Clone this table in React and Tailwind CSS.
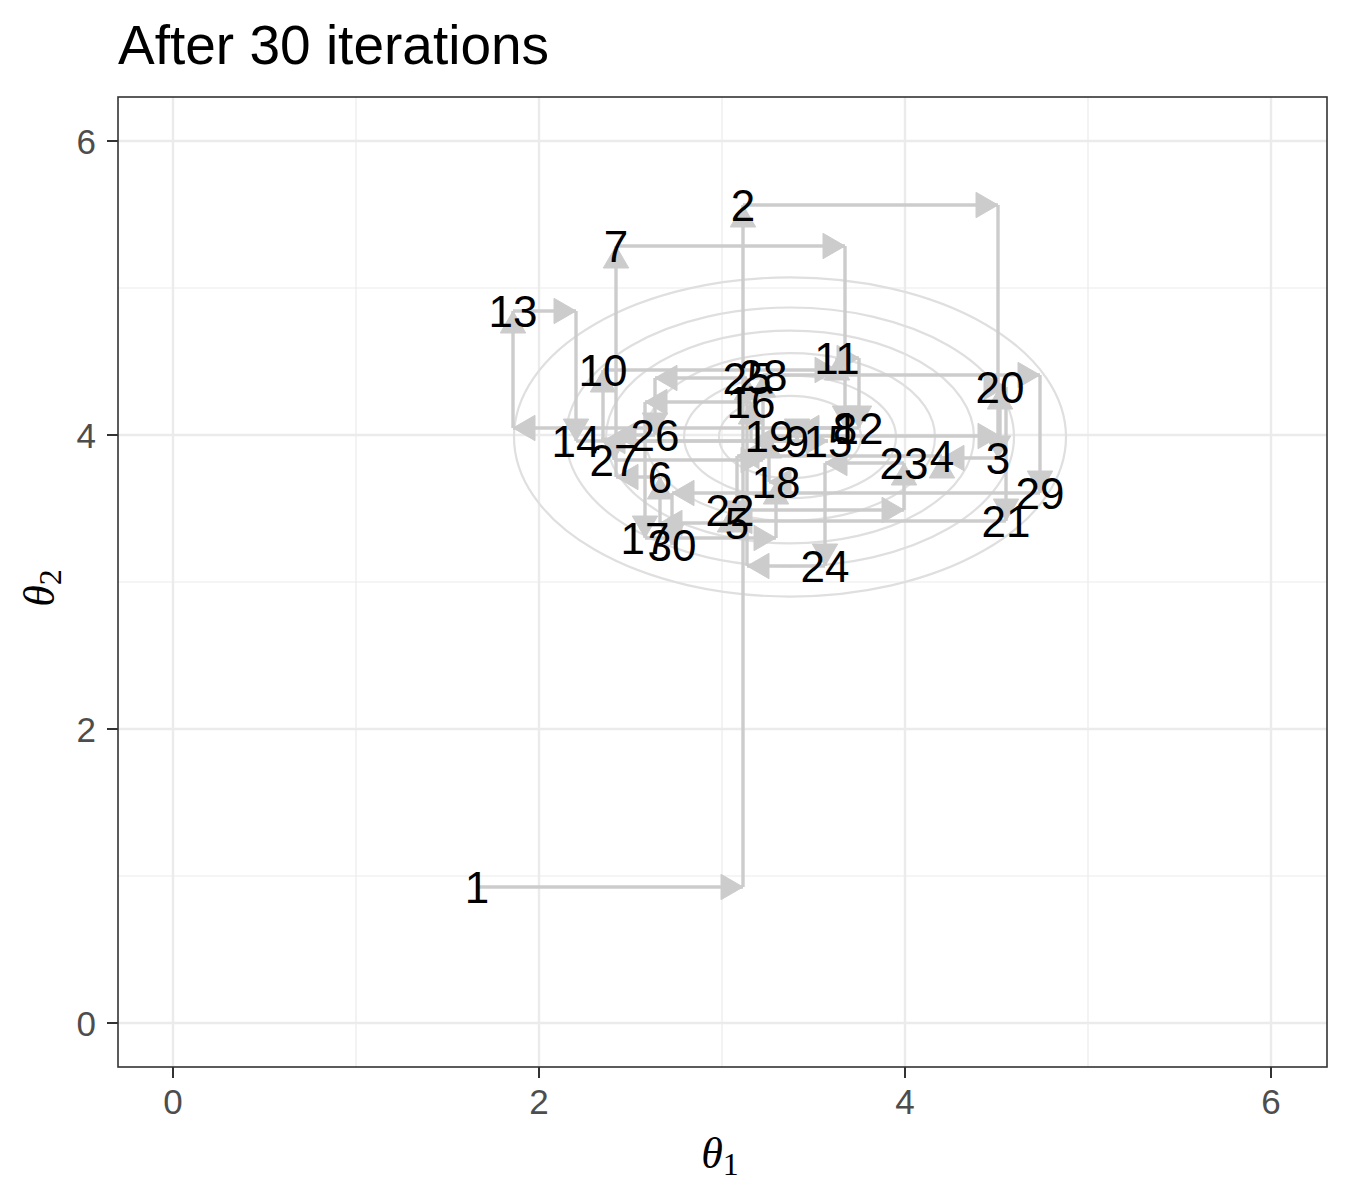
import React from 'react'

// pixel positions of the 30 draws (x, y) inside the 1350x1200 frame
const points = [
  [477, 887], [743, 205], [998, 458], [942, 456], [737, 523],
  [660, 477], [616, 246], [845, 428], [797, 441], [603, 370],
  [837, 358], [859, 428], [513, 311], [576, 441], [828, 441],
  [751, 402], [645, 538], [776, 482], [769, 436], [1000, 387],
  [1006, 521], [730, 510], [904, 463], [825, 566], [747, 378],
  [655, 435], [614, 460], [763, 375], [1040, 493], [672, 545],
]

const xTicks = [
  { v: 0, px: 173 }, { v: 2, px: 539 }, { v: 4, px: 905 }, { v: 6, px: 1271 },
]
const yTicks = [
  { v: 0, px: 1023 }, { v: 2, px: 729 }, { v: 4, px: 435 }, { v: 6, px: 141 },
]
const xMinor = [356, 722, 1088]
const yMinor = [288, 582, 876]

const ellipses = [276, 224, 184, 145, 106, 71]

const PANEL = { left: 118, top: 97, right: 1327, bottom: 1067 }

const buildSegments = () => {
  const segs = []
  for (let i = 0; i < points.length - 1; i++) {
    const [x0, y0] = points[i]
    const [x1, y1] = points[i + 1]
    segs.push([x0, y0, x1, y0])
    segs.push([x1, y0, x1, y1])
  }
  return segs
}

const arrowHead = (x0, y0, x1, y1) => {
  const dx = x1 - x0
  const dy = y1 - y0
  const len = Math.hypot(dx, dy)
  if (len < 0.5) return null
  const ux = dx / len
  const uy = dy / len
  const L = 22
  const W = 12.7
  const bx = x1 - ux * L
  const by = y1 - uy * L
  return `${x1},${y1} ${bx - uy * W},${by + ux * W} ${bx + uy * W},${by - ux * W}`
}

const Chart = () => {
  const segs = buildSegments()
  const sans = 'Liberation Sans, Arial, sans-serif'
  const serif = 'Liberation Serif, Times New Roman, serif'

  return (
    <svg width="1350" height="1125" viewBox="0 75 1350 1125" className="block">
      {/* grid */}
      {xMinor.map(x => (
        <line key={'xm' + x} x1={x} x2={x} y1={PANEL.top} y2={PANEL.bottom} stroke="#ebebeb" strokeWidth="1.2" />
      ))}
      {yMinor.map(y => (
        <line key={'ym' + y} x1={PANEL.left} x2={PANEL.right} y1={y} y2={y} stroke="#ebebeb" strokeWidth="1.2" />
      ))}
      {xTicks.map(t => (
        <line key={'xg' + t.v} x1={t.px} x2={t.px} y1={PANEL.top} y2={PANEL.bottom} stroke="#ebebeb" strokeWidth="2.4" />
      ))}
      {yTicks.map(t => (
        <line key={'yg' + t.v} x1={PANEL.left} x2={PANEL.right} y1={t.px} y2={t.px} stroke="#ebebeb" strokeWidth="2.4" />
      ))}

      {/* density contours */}
      {ellipses.map(a => (
        <ellipse key={a} cx="790" cy="437" rx={a} ry={a / 1.73} fill="none" stroke="#dfdfdf" strokeWidth="2.2" />
      ))}

      {/* gibbs path */}
      {segs.map(([x0, y0, x1, y1], i) => (
        <line key={'s' + i} x1={x0} y1={y0} x2={x1} y2={y1} stroke="#cccccc" strokeWidth="3.4" />
      ))}
      {segs.map(([x0, y0, x1, y1], i) => {
        const head = arrowHead(x0, y0, x1, y1)
        return head ? <polygon key={'h' + i} points={head} fill="#cccccc" stroke="#cccccc" strokeWidth="1" /> : null
      })}

      {/* labels */}
      {points.map(([x, y], i) => (
        <text key={'p' + i} x={x} y={y + 15.5} textAnchor="middle" fontFamily={sans} fontSize="44" fill="#000">
          {i + 1}
        </text>
      ))}

      {/* panel border */}
      <rect
        x={PANEL.left}
        y={PANEL.top}
        width={PANEL.right - PANEL.left}
        height={PANEL.bottom - PANEL.top}
        fill="none"
        stroke="#333333"
        strokeWidth="1.6"
      />

      {/* axes */}
      {xTicks.map(t => (
        <g key={'xt' + t.v}>
          <line x1={t.px} x2={t.px} y1={PANEL.bottom} y2={PANEL.bottom + 11} stroke="#333333" strokeWidth="2" />
          <text x={t.px} y="1114" textAnchor="middle" fontFamily={sans} fontSize="35" fill="#4d4d4d">{t.v}</text>
        </g>
      ))}
      {yTicks.map(t => (
        <g key={'yt' + t.v}>
          <line x1={PANEL.left - 11} x2={PANEL.left} y1={t.px} y2={t.px} stroke="#333333" strokeWidth="2" />
          <text x="96" y={t.px + 12.5} textAnchor="end" fontFamily={sans} fontSize="35" fill="#4d4d4d">{t.v}</text>
        </g>
      ))}

      <text x="720" y="1168" textAnchor="middle" fontFamily={serif} fontSize="44" fill="#000">
        <tspan fontStyle="italic">θ</tspan>
        <tspan fontSize="32" dy="7">1</tspan>
      </text>
      <text transform="translate(54,588) rotate(-90)" textAnchor="middle" fontFamily={serif} fontSize="44" fill="#000">
        <tspan fontStyle="italic">θ</tspan>
        <tspan fontSize="32" dy="7">2</tspan>
      </text>
    </svg>
  )
}

export default function App() {
  return (
    <div className="w-[1350px] h-[1200px] bg-white flex flex-col overflow-hidden">
      <h1 className="pl-[118px] pt-[15px] h-[75px] text-[55px] leading-[60px] text-black font-['Liberation_Sans',Arial,sans-serif]">
        After 30 iterations
      </h1>
      <Chart />
    </div>
  )
}
